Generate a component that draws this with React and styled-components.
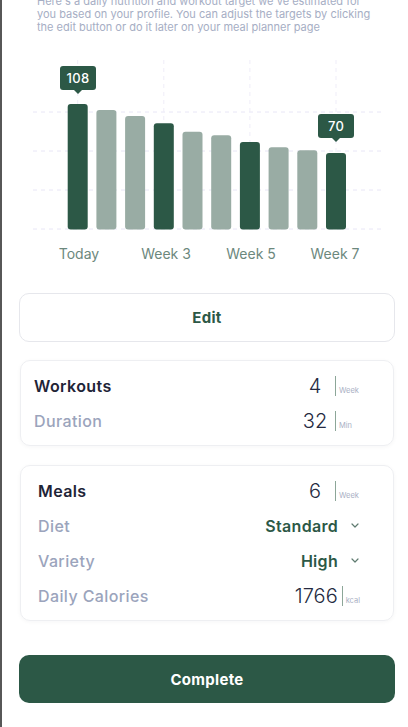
import React from 'react'
import styled, { createGlobalStyle } from 'styled-components'

const bars = [
  { top: 104, dark: true },
  { top: 110 },
  { top: 116 },
  { top: 123.3, dark: true },
  { top: 131.7 },
  { top: 135.3 },
  { top: 142, dark: true },
  { top: 147.3 },
  { top: 150.3 },
  { top: 153, dark: true },
]

const labels = [
  { x: 79, text: 'Today' },
  { x: 166, text: 'Week 3' },
  { x: 251, text: 'Week 5' },
  { x: 335, text: 'Week 7' },
]

const Chevron = () => (
  <svg width="8" height="5" viewBox="0 0 8 5">
    <path d="M1 1l3 3 3-3" fill="none" stroke="#5f7b70" strokeWidth="1.2" strokeLinecap="round" strokeLinejoin="round" />
  </svg>
)

const Tip = ({ x, y, value }) => (
  <g>
    <rect x={x - 18} y={y} width="36" height="24" rx="3" fill="#2c5846" />
    <path d={`M${x - 4} ${y + 24}L${x} ${y + 28}L${x + 4} ${y + 24}Z`} fill="#2c5846" />
    <text x={x} y={y + 16.5} textAnchor="middle" fill="#fff" fontSize="13" fontWeight="500" letterSpacing="0.3">
      {value}
    </text>
  </g>
)

const Chart = () => (
  <ChartSvg width="406" height="215" viewBox="2 55 406 215">
    {[112, 151, 190, 229].map((y) => (
      <line key={y} x1="33" x2="381" y1={y} y2={y} stroke="#e8e6f6" strokeDasharray="4 4" />
    ))}
    {bars.map((b, i) =>
      b.dark ? (
        <line key={'v' + i} x1={77.7 + i * 28.7} x2={77.7 + i * 28.7} y1="60" y2={b.top} stroke="#efedf8" strokeDasharray="4 4" />
      ) : null
    )}
    {bars.map((b, i) => (
      <rect
        key={i}
        x={67.7 + i * 28.7}
        y={b.top}
        width="20"
        height={229.5 - b.top}
        rx="3"
        fill={b.dark ? '#2c5846' : '#99aca4'}
      />
    ))}
    <Tip x={78} y={66} value="108" />
    <Tip x={336} y={114} value="70" />
    {labels.map((l) => (
      <text key={l.text} x={l.x} y="259" textAnchor="middle" fill="#6c887d" fontSize="14">
        {l.text}
      </text>
    ))}
  </ChartSvg>
)

const Value = ({ num, unit, fit }) => (
  <ValueGroup>
    <Num>{num}</Num>
    <Unit $fit={fit}>{unit}</Unit>
  </ValueGroup>
)

const Select = ({ value }) => (
  <SelectGroup>
    <SelectText>{value}</SelectText>
    <Chevron />
  </SelectGroup>
)

export default function App() {
  return (
    <>
      <Global />
      <Page>
        <Intro>
          Here's a daily nutrition and workout target we've estimated for you based on your profile. You
          can adjust the targets by clicking the edit button or do it later on your meal planner page
        </Intro>
        <Chart />
        <EditButton>Edit</EditButton>
        <Card $inset={13}>
          <Row>
            <Label $strong>Workouts</Label>
            <Value num="4" unit="Week" />
          </Row>
          <Row>
            <Label>Duration</Label>
            <Value num="32" unit="Min" />
          </Row>
        </Card>
        <Card $inset={17} $gap={19}>
          <Row>
            <Label $strong>Meals</Label>
            <Value num="6" unit="Week" />
          </Row>
          <Row>
            <Label>Diet</Label>
            <Select value="Standard" />
          </Row>
          <Row>
            <Label>Variety</Label>
            <Select value="High" />
          </Row>
          <Row>
            <Label>Daily Calories</Label>
            <Value num="1766" unit="kcal" fit />
          </Row>
        </Card>
        <CompleteButton>Complete</CompleteButton>
      </Page>
    </>
  )
}

const Global = createGlobalStyle`
  html, body {
    margin: 0;
    background: #fff;
  }
  body {
    border-left: 2px solid #575757;
    font-family: 'Inter', 'Noto Sans', sans-serif;
    overflow: hidden;
    height: 727px;
    box-sizing: border-box;
  }
`

const Page = styled.div`
  display: flex;
  flex-direction: column;
`

const Intro = styled.p`
  margin: -5px 31px 0 35px;
  font-size: 11px;
  line-height: 13px;
  color: #a6aec4;
`

const ChartSvg = styled.svg`
  display: block;
  margin-top: 21px;
  font-family: 'Inter', sans-serif;
`

const EditButton = styled.button`
  margin: 23px 13px 0 17px;
  height: 49px;
  border: 1px solid #e6e7ec;
  border-radius: 10px;
  background: #fff;
  font-family: inherit;
  font-size: 15px;
  font-weight: 700;
  letter-spacing: 0.3px;
  color: #2c5846;
`

const Card = styled.div`
  margin: ${(p) => p.$gap || 18}px 14px 0 18px;
  padding: 7px 33px 7px ${(p) => p.$inset}px;
  border: 1px solid #eeeff2;
  border-radius: 10px;
  box-shadow: 0 1px 4px rgba(20, 30, 60, 0.04);
  display: flex;
  flex-direction: column;
`

const Row = styled.div`
  height: 35px;
  display: flex;
  align-items: center;
  justify-content: space-between;
`

const Label = styled.span`
  font-size: 16px;
  letter-spacing: 0.4px;
  font-weight: ${(p) => (p.$strong ? 600 : 500)};
  color: ${(p) => (p.$strong ? '#1f2437' : '#9ba4bc')};
`

const ValueGroup = styled.div`
  display: flex;
  align-items: center;
`

const Num = styled.span`
  min-width: 32px;
  padding-right: 4px;
  text-align: center;
  font-size: 20px;
  font-weight: 300;
  color: #252a41;
  border-right: 1px solid #8ca698;
  line-height: 20px;
`

const Unit = styled.span`
  min-width: ${(p) => (p.$fit ? 0 : 21)}px;
  padding-left: 3px;
  padding-top: 10px;
  font-size: 7.5px;
  color: #a9b0c4;
`

const SelectGroup = styled.div`
  display: flex;
  align-items: center;
  gap: 13px;
  margin-right: 1px;
`

const SelectText = styled.span`
  font-size: 16px;
  font-weight: 600;
  letter-spacing: 0.3px;
  color: #2c5846;
`

const CompleteButton = styled.button`
  margin: 34px 13px 0 17px;
  height: 48px;
  border: none;
  border-radius: 10px;
  background: #2c5846;
  font-family: inherit;
  font-size: 15px;
  font-weight: 700;
  letter-spacing: 0.3px;
  color: #fff;
`
